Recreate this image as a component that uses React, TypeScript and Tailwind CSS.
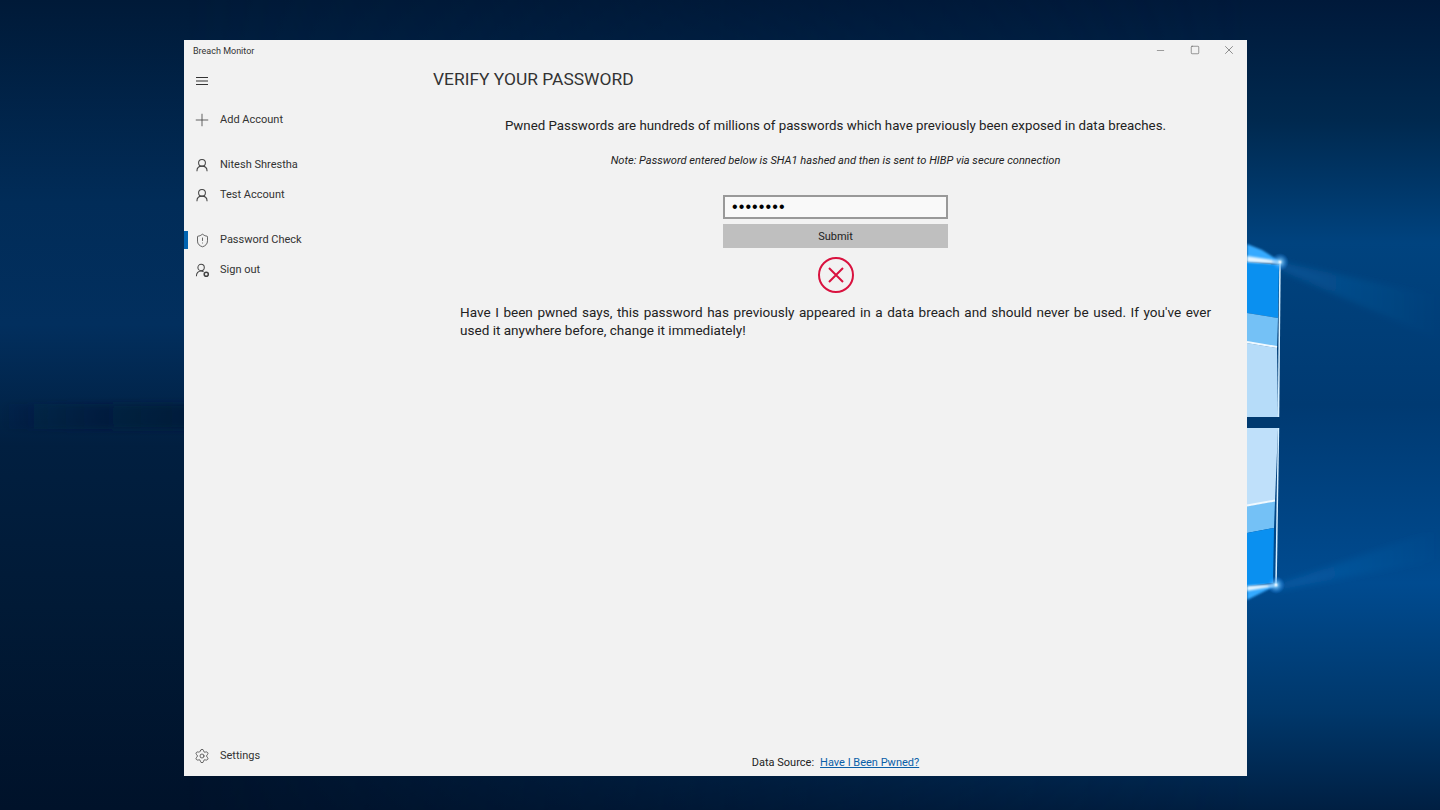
import { Plus, ShieldAlert, Settings, Minus, Square, X } from 'lucide-react';

const font = '[font-family:Roboto,sans-serif]';

function Wallpaper() {
  return (
    <svg className="absolute inset-0" width="1440" height="810" viewBox="0 0 1440 810">
      <defs>
        <linearGradient id="left" x1="0" y1="0" x2="0" y2="1">
          <stop offset="0" stopColor="#001a38" />
          <stop offset="0.25" stopColor="#012c58" />
          <stop offset="0.4" stopColor="#022f5e" />
          <stop offset="0.55" stopColor="#011f40" />
          <stop offset="0.75" stopColor="#011a36" />
          <stop offset="1" stopColor="#00122a" />
        </linearGradient>
        <linearGradient id="right" x1="0" y1="0" x2="0" y2="1">
          <stop offset="0" stopColor="#00193a" />
          <stop offset="0.15" stopColor="#00294f" />
          <stop offset="0.3" stopColor="#00437f" />
          <stop offset="0.5" stopColor="#003a72" />
          <stop offset="0.72" stopColor="#004b90" />
          <stop offset="0.88" stopColor="#00376a" />
          <stop offset="1" stopColor="#001f42" />
        </linearGradient>
        <linearGradient id="fade" x1="0" y1="0" x2="1" y2="0">
          <stop offset="0.13" stopColor="#000000" />
          <stop offset="0.87" stopColor="#ffffff" />
        </linearGradient>
        <mask id="fadeMask">
          <rect width="1440" height="810" fill="url(#fade)" />
        </mask>
        <linearGradient id="band" x1="0" y1="0" x2="1" y2="0">
          <stop offset="0" stopColor="#011a38" stopOpacity="0" />
          <stop offset="0.5" stopColor="#011a38" stopOpacity="0.5" />
          <stop offset="1" stopColor="#011a38" stopOpacity="0.8" />
        </linearGradient>
        <linearGradient id="ray" x1="0" y1="0" x2="1" y2="0">
          <stop offset="0" stopColor="#1c86d8" stopOpacity="0.25" />
          <stop offset="1" stopColor="#1c86d8" stopOpacity="0" />
        </linearGradient>
        <radialGradient id="glow">
          <stop offset="0" stopColor="#ffffff" />
          <stop offset="0.3" stopColor="#7ccaff" stopOpacity="0.7" />
          <stop offset="1" stopColor="#1a8cff" stopOpacity="0" />
        </radialGradient>
        <filter id="soft" x="-30%" y="-60%" width="160%" height="220%">
          <feGaussianBlur stdDeviation="3" />
        </filter>
        <filter id="softer" x="-30%" y="-200%" width="160%" height="500%">
          <feGaussianBlur stdDeviation="1" />
        </filter>
      </defs>
      <rect width="1440" height="810" fill="url(#left)" />
      <rect width="1440" height="810" fill="url(#right)" mask="url(#fadeMask)" />
      <rect x="0" y="404" width="190" height="25" fill="url(#band)" filter="url(#soft)" />
      <polygon points="1280,262 1440,296 1440,340 1280,270" fill="url(#ray)" filter="url(#soft)" />
      <polygon points="1277,585 1440,528 1440,560 1277,590" fill="url(#ray)" filter="url(#soft)" />

      <polygon points="1247,244 1262,250 1281,262 1247,262" fill="#35aaff" filter="url(#softer)" />
      <polygon points="1247,586 1277,585 1247,600" fill="#35aaff" filter="url(#softer)" />

      <polygon points="1247,262 1279,265 1278,318 1247,313" fill="#0a90f0" />
      <polygon points="1247,313 1278,318 1277,348 1247,343" fill="#74c1f6" />
      <polygon points="1247,343 1277,348 1278,417 1247,417" fill="#b6dcf9" />
      <polygon points="1247,428 1278,428 1275,501 1247,506" fill="#bfe0fa" />
      <polygon points="1247,506 1275,501 1274,528 1247,533" fill="#74c1f6" />
      <polygon points="1247,533 1274,528 1273,583 1247,586" fill="#0a90f0" />
      <rect x="1247" y="417" width="33" height="11" fill="#003a70" />

      <polygon points="1247,256 1280,261 1280,264 1247,262" fill="#e4f4ff" filter="url(#softer)" />
      <polygon points="1247,586 1277,584 1277,586 1247,591" fill="#e4f4ff" filter="url(#softer)" />
      <line x1="1247" y1="342" x2="1277" y2="347" stroke="#f0f9ff" strokeWidth="2" />
      <line x1="1247" y1="505.5" x2="1275" y2="500.5" stroke="#f0f9ff" strokeWidth="2" />
      <line x1="1280" y1="262" x2="1278.5" y2="417" stroke="#d6f0ff" strokeWidth="1.5" />
      <line x1="1278.5" y1="428" x2="1276" y2="585" stroke="#d6f0ff" strokeWidth="1.5" />
      <circle cx="1280" cy="262" r="9" fill="url(#glow)" />
      <circle cx="1276" cy="585" r="9" fill="url(#glow)" />
    </svg>
  );
}

function PersonIcon() {
  return (
    <svg width="14" height="14" viewBox="0 0 16 16" fill="none" stroke="currentColor" strokeWidth="1.2">
      <circle cx="8" cy="5.5" r="3.9" />
      <path d="M2.2 15c0-3.6 2.4-5.7 5.8-5.7s5.8 2.1 5.8 5.7" />
    </svg>
  );
}

function SignOutIcon() {
  return (
    <svg width="15" height="15" viewBox="0 0 16 16" fill="none" stroke="currentColor" strokeWidth="1.1">
      <circle cx="6.5" cy="4.8" r="3.4" />
      <path d="M1.5 14c0-3.2 2-5.4 5-5.4 1 0 1.8.2 2.6.7" />
      <circle cx="12" cy="12" r="2.2" strokeWidth="1.6" />
    </svg>
  );
}

function NavItem({ icon, label, active }: { icon: React.ReactNode; label: string; active?: boolean }) {
  return (
    <div className="relative flex h-[30px] items-center">
      {active && <div className="absolute left-0 top-[6px] h-[18px] w-[4px] bg-[#0063b1]" />}
      <div className="flex w-[36px] justify-center text-[#444444]">{icon}</div>
      <span className="text-[11px] text-[#333333]">{label}</span>
    </div>
  );
}

export default function App() {
  return (
    <div className={`relative h-[810px] w-[1440px] overflow-hidden ${font}`}>
      <Wallpaper />
      <div className="relative left-[184px] top-[40px] flex h-[736px] w-[1063px] flex-col bg-[#f2f2f2]">
        <div className="flex h-[22px] items-center justify-between">
          <span className="mt-[2px] pl-[9px] text-[9px] text-[#333333]">Breach Monitor</span>
          <div className="-mt-[2px] flex items-center pr-[1px] text-[#555555]">
            <div className="flex w-[34px] justify-center pr-[1px]"><Minus size={11} strokeWidth={1.2} /></div>
            <div className="flex w-[34px] justify-center"><Square size={10} strokeWidth={1.4} /></div>
            <div className="flex w-[34px] justify-center"><X size={14} strokeWidth={1.1} /></div>
          </div>
        </div>
        <div className="flex flex-1">
          <div className="flex w-[240px] flex-col">
            <div className="flex h-[38px] w-[36px] items-center justify-center text-[#333333]">
              <svg width="12" height="10" viewBox="0 0 12 10" stroke="currentColor" strokeWidth="1">
                <path d="M0 1.5h12M0 5h12M0 8.5h12" />
              </svg>
            </div>
            <div className="mt-[5px]">
              <NavItem icon={<Plus size={20} strokeWidth={1} />} label="Add Account" />
            </div>
            <div className="mt-[15px]">
              <NavItem icon={<PersonIcon />} label="Nitesh Shrestha" />
              <NavItem icon={<PersonIcon />} label="Test Account" />
            </div>
            <div className="mt-[15px]">
              <NavItem active icon={<ShieldAlert size={15} strokeWidth={1.3} />} label="Password Check" />
              <NavItem icon={<SignOutIcon />} label="Sign out" />
            </div>
            <div className="mt-auto mb-[5px]">
              <NavItem icon={<Settings size={16} strokeWidth={1.2} />} label="Settings" />
            </div>
          </div>
          <div className="flex flex-1 flex-col">
            <h1 className="pl-[9px] pt-[5px] text-[17.4px] leading-[24px] text-[#333333]">VERIFY YOUR PASSWORD</h1>
            <p className="mt-[25px] text-center text-[13.3px] leading-[20px] text-[#222222]">
              Pwned Passwords are hundreds of millions of passwords which have previously been exposed in data breaches.
            </p>
            <p className="mt-[18px] text-center text-[11.1px] italic leading-[14px] text-[#222222]">
              Note: Password entered below is SHA1 hashed and then is sent to HIBP via secure connection
            </p>
            <div className="mt-[27px] flex flex-col items-center">
              <div className="flex h-[24px] w-[225px] items-center border-2 border-[#999999] bg-[#f9f9f9] pl-[7px] text-[16px] tracking-[1.1px] text-black [font-family:'Liberation_Sans',sans-serif]">
                ••••••••
              </div>
              <button className="mt-[5px] h-[24px] w-[225px] bg-[#bfbfbf] pt-[2px] text-[11px] text-[#222222]">Submit</button>
              <svg className="mt-[8px]" width="38" height="38" viewBox="0 0 38 38" fill="none" stroke="#d9123f">
                <circle cx="19" cy="19" r="17" strokeWidth="2" />
                <path d="M12 12 L26 26 M26 12 L12 26" strokeWidth="2" />
              </svg>
            </div>
            <p className="mt-[9px] ml-[36px] w-[751px] text-justify text-[13.55px] leading-[18px] text-[#222222]">
              Have I been pwned says, this password has previously appeared in a data breach and should never be used. If you've ever used it anywhere before, change it immediately!
            </p>
            <div className="mt-auto mb-[5px] flex justify-center gap-[6px] text-[11px] leading-[16px]">
              <span className="text-[#222222]">Data Source:</span>
              <span className="text-[#0a5fa8] underline">Have I Been Pwned?</span>
            </div>
          </div>
        </div>
      </div>
    </div>
  );
}
